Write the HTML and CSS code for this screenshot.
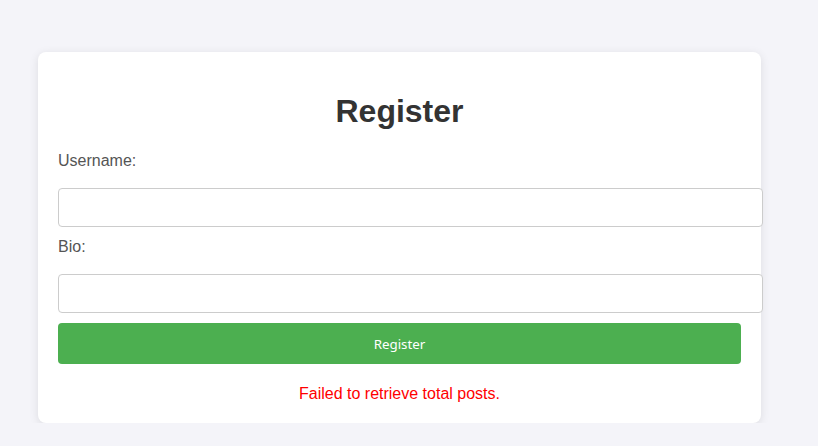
FILE: index.html
```html
<!DOCTYPE html>
<html>
<head>
<meta charset="utf-8">
<link rel="stylesheet" href="styles.css">
</head>
<body>
<div class="card">
  <h1 class="title">Register</h1>
  <form class="form">
    <label class="label">Username:</label>
    <input class="input" type="text">
    <label class="label label-next">Bio:</label>
    <input class="input" type="text">
    <button class="btn" type="button">Register</button>
  </form>
  <p class="error">Failed to retrieve total posts.</p>
</div>
</body>
</html>
```
FILE: styles.css
```css
html, body {
  margin: 0;
  padding: 0;
  background: #f4f4f9;
  font-family: "Liberation Sans", Arial, sans-serif;
}
.card {
  box-sizing: border-box;
  width: 723px;
  margin: 52px 0 0 38px;
  padding: 20px;
  background: #fff;
  border-radius: 8px;
  box-shadow: 0 2px 10px rgba(0, 0, 0, 0.1);
}
.title {
  margin: 21px 0 22px;
  font-size: 32px;
  font-weight: bold;
  color: #333;
  text-align: center;
  line-height: 37px;
}
.form {
  margin: 0;
}
.label {
  display: block;
  font-size: 16px;
  line-height: 18px;
  color: #555;
  margin-bottom: 18px;
}
.label-next {
  margin-top: 11px;
}
.input {
  display: block;
  box-sizing: content-box;
  width: 100%;
  height: 17px;
  margin: 0 0 10px;
  padding: 10px;
  border: 1px solid #ccc;
  border-radius: 4px;
  font-size: 16px;
  background: #fff;
}
.btn {
  display: block;
  width: 100%;
  height: 41px;
  border: none;
  border-radius: 4px;
  background: #4caf50;
  color: #fff;
  font-family: "Noto Sans", "Open Sans", sans-serif;
  font-size: 13.33px;
  cursor: pointer;
}
.error {
  margin: 21px 0 0;
  color: #ff0000;
  font-size: 16px;
  line-height: 18px;
  text-align: center;
}
```
